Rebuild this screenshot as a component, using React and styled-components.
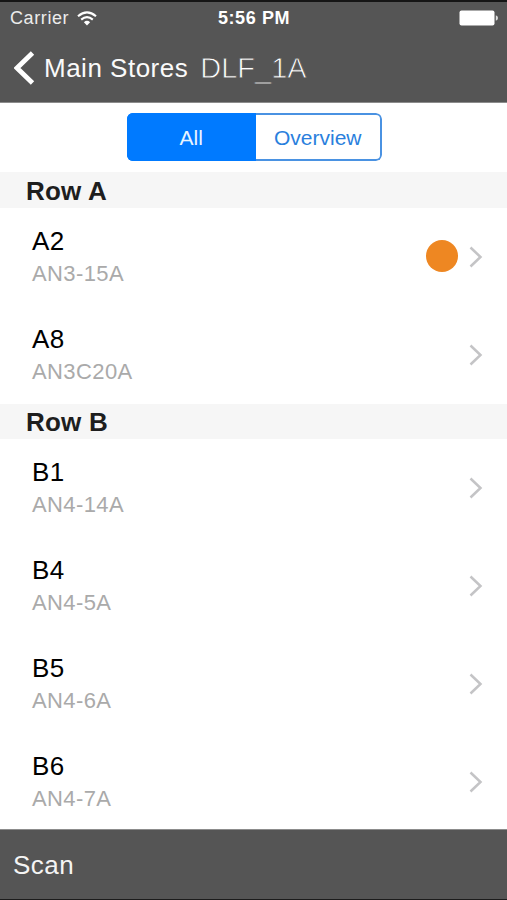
import styled, { createGlobalStyle } from "styled-components";

const GlobalStyle = createGlobalStyle`
  * {
    box-sizing: border-box;
  }

  body {
    margin: 0;
    background-color: #fff;
    font-family: "Liberation Sans", Arial, sans-serif;
  }

  button {
    font-family: inherit;
    border: none;
    background: none;
    padding: 0;
  }
`;

const Screen = styled.div`
  display: flex;
  flex-direction: column;
  width: 507px;
  height: 900px;
  overflow: hidden;
  background-color: #fff;
`;

const Header = styled.header`
  height: 103px;
  flex: none;
  background-color: #555;
  border-top: 2px solid #151515;
  border-bottom: 1px solid #8c8c8c;
  color: #fff;
`;

const StatusBar = styled.div`
  display: grid;
  grid-template-columns: 1fr auto 1fr;
  align-items: center;
  height: 32px;
  padding: 0 9px 0 10px;
`;

const Carrier = styled.div`
  display: flex;
  align-items: center;
  gap: 8px;
  font-size: 18px;
  letter-spacing: 0.6px;
  line-height: 22px;
  color: #ececec;
`;

const Time = styled.div`
  font-size: 18px;
  font-weight: bold;
  letter-spacing: 0.6px;
  line-height: 22px;
`;

const BatteryWrapper = styled.div`
  display: flex;
  justify-content: flex-end;
`;

const NavBar = styled.nav`
  display: flex;
  align-items: center;
  height: 68px;
  padding-left: 14px;
`;

const BackButton = styled.button`
  display: flex;
  align-items: center;
  gap: 9px;
  color: #fafafa;
  font-size: 26px;
  letter-spacing: 0.5px;
  line-height: 32px;
`;

/* the stroke in the bar colour thins the regular weight down */
const PageTitle = styled.h1`
  margin: 0 0 0 12px;
  font-size: 29px;
  font-weight: normal;
  line-height: 32px;
  color: #fff;
  -webkit-text-stroke: 0.8px #555;
`;

const SegmentWrapper = styled.div`
  display: flex;
  justify-content: center;
  flex: none;
  height: 69px;
  padding: 10px 0 0 2px;
`;

const Segments = styled.div`
  display: flex;
  width: 255px;
  height: 48px;
  border-radius: 6px;
  overflow: hidden;
`;

const Segment = styled.button`
  flex: 1;
  padding-top: 2px;
  font-size: 21px;
  line-height: 24px;
  background-color: ${({ $active }) => ($active ? "#007aff" : "#fff")};
  color: ${({ $active }) => ($active ? "#e8f4ff" : "#2a7fdd")};
  border: 2px solid ${({ $active }) => ($active ? "#007aff" : "#4a92e2")};

  &:last-child {
    border-left: none;
    border-radius: 0 6px 6px 0;
  }
`;

const List = styled.main`
  flex: 1;
  min-height: 0;
  overflow: hidden;
`;

const SectionTitle = styled.h2`
  height: ${({ $height }) => $height}px;
  margin: 0;
  padding-left: 26px;
  background-color: #f6f6f6;
  font-size: 26px;
  letter-spacing: 0.2px;
  line-height: ${({ $height }) => $height + 2}px;
  color: #1e1e1e;
`;

const Item = styled.div`
  display: flex;
  align-items: center;
  height: 98px;
  padding: 0 24px 0 32px;
`;

const ItemText = styled.div`
  flex: 1;
`;

const ItemName = styled.div`
  font-size: 26px;
  letter-spacing: 0.3px;
  line-height: 32px;
  padding-bottom: 2px;
  color: #000;
`;

const ItemCode = styled.div`
  font-size: 22px;
  letter-spacing: 0.4px;
  line-height: 30px;
  color: #aaa;
`;

const Dot = styled.span`
  width: 32px;
  height: 32px;
  margin: 0 11px 2px 0;
  border-radius: 50%;
  background-color: #ee8722;
`;

const Toolbar = styled.footer`
  display: flex;
  align-items: center;
  flex: none;
  height: 71px;
  padding-left: 13px;
  background-color: #555;
  border-top: 1px solid #8c8c8c;
  border-bottom: 1px solid #1c1c1c;
`;

const ScanButton = styled.button`
  font-size: 26px;
  letter-spacing: 0.5px;
  line-height: 32px;
  color: #f4f4f4;
`;

const sections = [
  {
    title: "Row A",
    height: 36,
    items: [
      { name: "A2", code: "AN3-15A", marked: true },
      { name: "A8", code: "AN3C20A" },
    ],
  },
  {
    title: "Row B",
    height: 35,
    items: [
      { name: "B1", code: "AN4-14A" },
      { name: "B4", code: "AN4-5A" },
      { name: "B5", code: "AN4-6A" },
      { name: "B6", code: "AN4-7A" },
    ],
  },
];

const WifiIcon = () => (
  <svg width="20" height="15" viewBox="0 0 20 15" fill="none">
    <path d="M1 5.2Q10 -2.6 19 5.2" stroke="#fff" strokeWidth="2.1" />
    <path d="M4.2 8.6Q10 3.6 15.8 8.6" stroke="#fff" strokeWidth="2.1" />
    <path d="M6.9 11.3Q10 8.4 13.1 11.3L10 14.5Z" fill="#fff" />
  </svg>
);

const BatteryIcon = () => (
  <svg width="39" height="16" viewBox="0 0 39 16">
    <rect x="0.5" y="0.5" width="35" height="15" rx="2" fill="#fff" />
    <path d="M36.8 5.2Q39 6 39 8T36.8 10.8Z" fill="#ddd" />
  </svg>
);

const BackIcon = () => (
  <svg width="21" height="34" viewBox="0 0 21 34" fill="none">
    <path d="M18.5 2L3 17L18.5 32" stroke="#fff" strokeWidth="4.8" />
  </svg>
);

const ChevronIcon = () => (
  <svg width="14" height="22" viewBox="0 0 14 22" fill="none">
    <path d="M1.5 1.5L11.5 11L1.5 20.5" stroke="#c4c4c6" strokeWidth="2.5" />
  </svg>
);

const App = () => {
  return (
    <Screen>
      <GlobalStyle />
      <Header>
        <StatusBar>
          <Carrier>
            Carrier
            <WifiIcon />
          </Carrier>
          <Time>5:56 PM</Time>
          <BatteryWrapper>
            <BatteryIcon />
          </BatteryWrapper>
        </StatusBar>
        <NavBar>
          <BackButton>
            <BackIcon />
            Main Stores
          </BackButton>
          <PageTitle>DLF_1A</PageTitle>
        </NavBar>
      </Header>
      <SegmentWrapper>
        <Segments>
          <Segment $active>All</Segment>
          <Segment>Overview</Segment>
        </Segments>
      </SegmentWrapper>
      <List>
        {sections.map((section) => (
          <section key={section.title}>
            <SectionTitle $height={section.height}>{section.title}</SectionTitle>
            {section.items.map((item) => (
              <Item key={item.name}>
                <ItemText>
                  <ItemName>{item.name}</ItemName>
                  <ItemCode>{item.code}</ItemCode>
                </ItemText>
                {item.marked && <Dot />}
                <ChevronIcon />
              </Item>
            ))}
          </section>
        ))}
      </List>
      <Toolbar>
        <ScanButton>Scan</ScanButton>
      </Toolbar>
    </Screen>
  );
};

export default App;
